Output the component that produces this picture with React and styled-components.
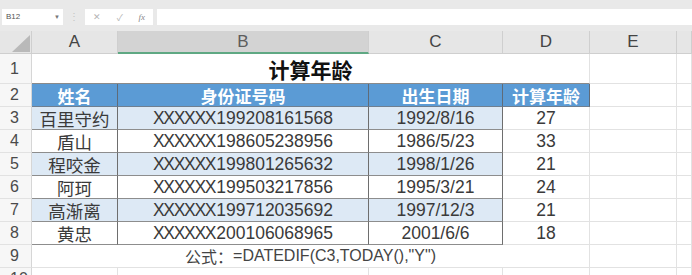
import React from 'react';
import styled, { createGlobalStyle, css } from 'styled-components';

const Global = createGlobalStyle`
  html, body { margin: 0; padding: 0; background: #ffffff; overflow: hidden; }
  body { font-family: "Liberation Sans", "Noto Sans CJK SC", sans-serif; }
`;

const Page = styled.div`
  width: 692px;
  height: 275px;
  overflow: hidden;
  background: #fff;
`;

const FormulaBar = styled.div`
  display: flex;
  align-items: flex-start;
  height: 31px;
  box-sizing: border-box;
  padding-top: 9px;
  background: #e9e9e9;
`;

const NameBox = styled.div`
  position: relative;
  width: 61px;
  height: 16px;
  margin-left: 2px;
  background: #fff;
  font-size: 8px;
  color: #555;
  line-height: 16px;
  padding-left: 4px;
  box-sizing: border-box;
`;

const Caret = styled.span`
  position: absolute;
  right: 3px;
  top: 0;
  font-size: 6px;
  color: #777;
`;

const Dots = styled.div`
  width: 22px;
  text-align: center;
  color: #c4c4c4;
  font-size: 10px;
  line-height: 16px;
`;

const ActionBox = styled.div`
  display: flex;
  align-items: center;
  justify-content: space-around;
  width: 68px;
  height: 16px;
  background: #fff;
  color: #b5b5b5;
  font-size: 9px;
`;

const FxText = styled.span`
  font-family: "Liberation Serif", serif;
  font-style: italic;
  color: #888;
  font-size: 9px;
`;

const FormulaInput = styled.div`
  flex: 1;
  height: 16px;
  margin-left: 4px;
  background: #fff;
`;

const Sheet = styled.div`
  display: grid;
  grid-template-columns: 32px 86px 251px 134px 87px 87px 1fr;
  grid-template-rows: 23px 30px repeat(9, 23px);
`;

const ColHead = styled.div`
  display: flex;
  align-items: center;
  justify-content: center;
  box-sizing: border-box;
  background: ${p => (p.$selected ? '#d3d3d3' : '#e6e6e6')};
  border-right: 1px solid #cfcfcf;
  border-bottom: ${p => (p.$selected ? '2px solid #5fa883' : '1px solid #cfcfcf')};
  color: ${p => (p.$selected ? '#5d5d5d' : '#444')};
  font-size: 17px;
`;

const Corner = styled.div`
  position: relative;
  background: #e6e6e6;
  border-right: 1px solid #cfcfcf;
  border-bottom: 1px solid #cfcfcf;
  box-sizing: border-box;
`;

const Triangle = styled.svg`
  position: absolute;
  left: 12px;
  top: 4px;
`;

const RowHead = styled.div`
  display: flex;
  align-items: center;
  padding-left: 10px;
  box-sizing: border-box;
  background: #f7f7f7;
  border-right: 1px solid #d6d6d6;
  border-bottom: 1px solid #e2e2e2;
  color: #4a4a4a;
  font-size: 16px;
`;

const Cell = styled.div`
  display: flex;
  align-items: center;
  justify-content: center;
  box-sizing: border-box;
  min-width: 0;
  white-space: nowrap;
  overflow: visible;
  border-right: 1px solid #e2e2e2;
  border-bottom: 1px solid #e2e2e2;
  color: #3a3a3a;
  font-size: 17.5px;
  background: #fff;
  ${p => p.$span && css`grid-column: span ${p.$span};`}
  ${p => p.$variant === 'title' && css`
    font-size: 21px;
    font-weight: bold;
    color: #111;
    font-family: "Noto Sans CJK SC", sans-serif;
    border-bottom-color: #8a8a8a;
  `}
  ${p => p.$variant === 'head' && css`
    background: #5b9bd5;
    color: #fff;
    font-weight: bold;
    font-size: 17px;
    font-family: "Noto Sans CJK SC", sans-serif;
    border-right-color: #5f6b78;
    border-bottom-color: #6f7f90;
  `}
  ${p => p.$variant === 'data' && css`
    background: ${p.$stripe ? '#dde9f5' : '#fff'};
    border-right-color: #6e6e6e;
    border-bottom-color: #8d8d8d;
  `}
  ${p => p.$variant === 'age' && css`
    background: #fff;
  `}
  ${p => p.$variant === 'note' && css`
    font-size: 16px;
    color: #444;
  `}
  ${p => p.$cjk && css`
    font-family: "Noto Sans CJK SC", sans-serif;
    font-size: 17.5px;
  `}
`;

const Mask = styled.span`
  letter-spacing: -1.3px;
  margin-right: 1px;
`;

const CjkSpan = styled.span`
  font-family: "Noto Sans CJK SC", sans-serif;
`;

const rows = [
  ['百里守约', 'XXXXXX', '199208161568', '1992/8/16', '27'],
  ['盾山', 'XXXXXX', '198605238956', '1986/5/23', '33'],
  ['程咬金', 'XXXXXX', '199801265632', '1998/1/26', '21'],
  ['阿珂', 'XXXXXX', '199503217856', '1995/3/21', '24'],
  ['高渐离', 'XXXXXX', '199712035692', '1997/12/3', '21'],
  ['黄忠', 'XXXXXX', '200106068965', '2001/6/6', '18'],
];

const cols = ['A', 'B', 'C', 'D', 'E', ''];

export default function App() {
  return (
    <Page>
      <Global />
      <FormulaBar>
        <NameBox>
          B12
          <Caret>▼</Caret>
        </NameBox>
        <Dots>⋮</Dots>
        <ActionBox>
          <span>✕</span>
          <span>✓</span>
          <FxText>fx</FxText>
        </ActionBox>
        <FormulaInput />
      </FormulaBar>
      <Sheet>
        <Corner>
          <Triangle width="18" height="17" viewBox="0 0 18 17">
            <polygon points="18,0 18,17 0,17" fill="#b9b9b9" />
          </Triangle>
        </Corner>
        {cols.map((c, i) => (
          <ColHead key={i} $selected={c === 'B'}>{c}</ColHead>
        ))}

        <RowHead>1</RowHead>
        <Cell $span={4} $variant="title">计算年龄</Cell>
        <Cell />
        <Cell />

        <RowHead>2</RowHead>
        <Cell $variant="head">姓名</Cell>
        <Cell $variant="head">身份证号码</Cell>
        <Cell $variant="head">出生日期</Cell>
        <Cell $variant="head">计算年龄</Cell>
        <Cell />
        <Cell />

        {rows.map((r, i) => {
          const stripe = i % 2 === 0;
          return (
            <React.Fragment key={i}>
              <RowHead>{i + 3}</RowHead>
              <Cell $variant="data" $stripe={stripe} $cjk>{r[0]}</Cell>
              <Cell $variant="data" $stripe={stripe}>
                <Mask>{r[1]}</Mask>
                {r[2]}
              </Cell>
              <Cell $variant="data" $stripe={stripe}>{r[3]}</Cell>
              <Cell $variant="age">{r[4]}</Cell>
              <Cell />
              <Cell />
            </React.Fragment>
          );
        })}

        <RowHead>9</RowHead>
        <Cell $span={4} $variant="note">
          <CjkSpan>公式：</CjkSpan>=DATEDIF(C3,TODAY(),"Y")
        </Cell>
        <Cell />
        <Cell />

        <RowHead>10</RowHead>
        <Cell />
        <Cell />
        <Cell />
        <Cell />
        <Cell />
        <Cell />
      </Sheet>
    </Page>
  );
}
